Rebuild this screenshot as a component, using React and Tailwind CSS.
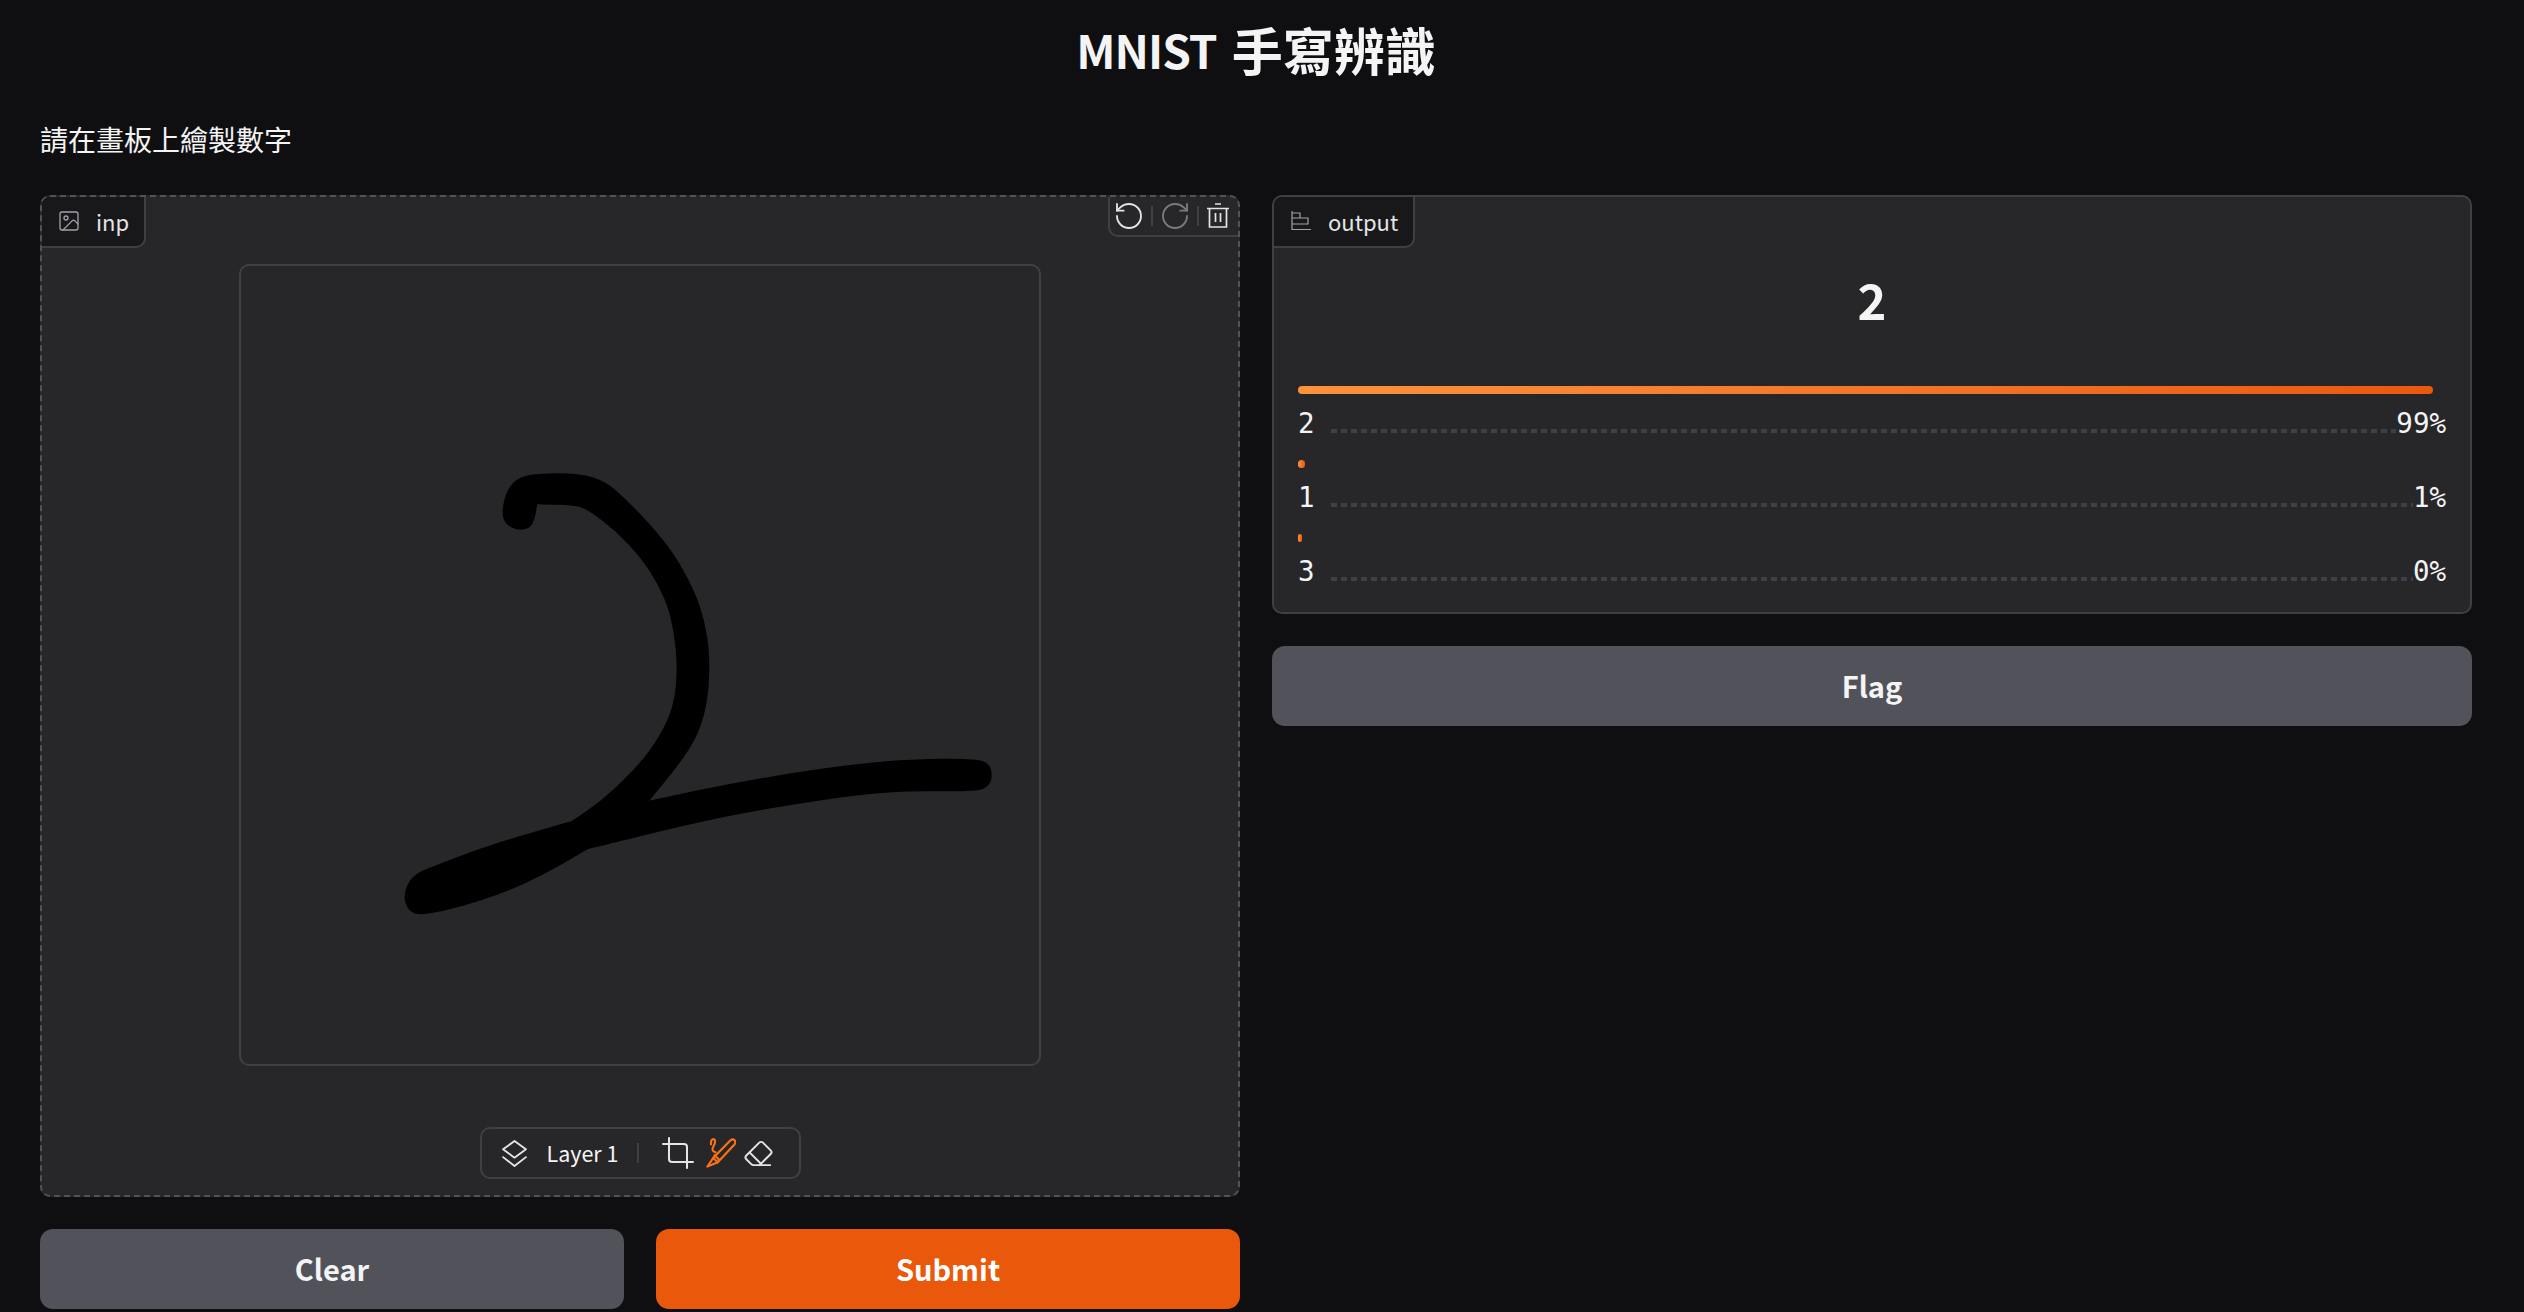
import { Image, RotateCcw, RotateCw, Crop, Eraser } from 'lucide-react';

const FONT = "font-['Noto_Sans_CJK_TC','Noto_Sans',sans-serif]";

// stroke outline traced from the sketch, doubled points stay sharp
const SKETCH = [
  [340,242],[308,224],[298,190],[308,128],[333,86],[380,70],[490,70],[552,93],[600,145],[660,220],[720,310],[770,420],[795,510],[808,610],[805,740],[782,850],[732,945],
  [660,1052],[660,1052],[800,1015],[1000,970],[1180,940],[1300,928],[1462,925],[1494,943],[1500,975],[1494,1007],[1462,1025],[1300,1023],[1180,1033],[1000,1065],[800,1110],
  [510,1197],[510,1197],[400,1275],[300,1330],[200,1370],[105,1396],[70,1386],[56,1335],[78,1277],[130,1248],[280,1180],
  [470,1113],[470,1113],[540,1055],[610,975],[660,905],[705,815],[725,730],[728,620],[712,490],[680,400],[640,325],[580,245],[510,180],[480,166],
  [385,163],[385,163],[380,205],[368,234],
];

function smoothPath(pts) {
  const mid = (a, b) => [(a[0] + b[0]) / 2, (a[1] + b[1]) / 2];
  let d = `M${mid(pts[pts.length - 1], pts[0]).join(' ')}`;
  pts.forEach((p, i) => {
    const next = pts[(i + 1) % pts.length];
    d += ` Q${p.join(' ')} ${mid(p, next).join(' ')}`;
  });
  return d + 'Z';
}

const RESULTS = [
  { label: '2', pct: '99%', bar: 'w-[1135px]' },
  { label: '1', pct: '1%', bar: 'w-[7px]' },
  { label: '3', pct: '0%', bar: 'w-[4px]' },
];

function Separator() {
  return <div className="w-[2px] h-5 bg-[#3f3f46]" />;
}

function TrashIcon() {
  return (
    <svg className="w-[22px] h-[25px] -ml-[2px] -mt-[2px] text-[#e4e4e7]" viewBox="0 0 22 25" fill="none" stroke="currentColor" strokeWidth="1.7">
      <path d="M8 1h6M0 5.5h22M2.5 5.5V24h17V5.5M8.5 10v9M13.5 10v9" />
    </svg>
  );
}

function BarsIcon() {
  return (
    <svg className="w-5 h-5 text-[#a1a1aa]" viewBox="0 0 20 20" fill="none" stroke="currentColor" strokeWidth="1.2">
      <path d="M1 0v18.5h19M1 2h8v5H1M1 7h16v6H1M1 13h16" />
    </svg>
  );
}

function LayersIcon() {
  return (
    <svg className="w-[25px] h-[27px] -ml-[1px] text-[#e4e4e7]" viewBox="0 0 24 26" fill="none" stroke="currentColor" strokeWidth="1.8" strokeLinejoin="round" strokeLinecap="round">
      <path d="M12 1 23 9 12 17 1 9Z" />
      <path d="M1 16.5 12 25l11-8.5" />
    </svg>
  );
}

function BrushIcon() {
  return (
    <svg className="w-[30px] h-[30px] ml-[10px] shrink-0 text-[#f97316]" viewBox="0 0 84 84" fill="none" stroke="currentColor" strokeWidth="6" strokeLinejoin="round" strokeLinecap="round">
      <path d="M20 56 68 7Q75 1 80 6 85 12 79 19L33 68Z" />
      <path d="M20 56 4 80 33 68M24 48l13 13" />
      <path d="M14 18Q13 3 21 3 30 5 21 23 13 36 27 40" />
    </svg>
  );
}

export default function App() {
  return (
    <div className={`h-[1312px] overflow-hidden bg-[#0f0f11] pl-10 pr-[52px] text-[#f4f4f5] ${FONT}`}>
      <h1 className="h-[98px] flex items-center justify-center gap-[15px] text-[51px] font-bold leading-none">
        <span className="text-[46px] tracking-[-1px]">MNIST</span>
        <span>手寫辨識</span>
      </h1>
      <p className="h-[82px] mb-[15px] flex items-center text-[28px] leading-none">請在畫板上繪製數字</p>

      <div className="grid grid-cols-2 gap-8">
        {/* Left column */}
        <div className="flex flex-col gap-8">
          <div className="relative h-[1002px] flex flex-col items-center rounded-[10px] border-2 border-dashed border-[#52525b] bg-[#27272a] pt-[67px]">
            <div className="absolute left-0 top-0 w-[104px] h-[51px] flex items-center gap-[18px] pl-[18px] pb-[2px] rounded-tl-[8px] rounded-br-[10px] border-r-2 border-b-2 border-[#3f3f46] bg-[#18181b] text-[22px] leading-none text-[#e4e4e7]">
              <Image className="w-6 h-6 -m-[3px] text-[#a1a1aa]" strokeWidth={1.3} />
              <span>inp</span>
            </div>

            <div className="absolute right-0 top-0 h-10 flex items-center gap-[10px] pl-[7px] pr-[9px] rounded-bl-[10px] rounded-tr-[8px] border-l-2 border-b-2 border-[#3f3f46]">
              <RotateCcw className="w-8 h-8 -m-1 text-[#e4e4e7]" strokeWidth={1.4} />
              <Separator />
              <RotateCw className="w-8 h-8 -m-1 text-[#7a7a80]" strokeWidth={1.4} />
              <Separator />
              <TrashIcon />
            </div>

            {/* Canvas */}
            <div className="w-[802px] h-[802px] rounded-[10px] border-2 border-[#3f3f46]">
              <svg className="block w-full h-full" viewBox="-417 -552 2394 2394">
                <g transform="scale(1.2245 1)">
                  <path d={smoothPath(SKETCH)} fill="#000" />
                </g>
              </svg>
            </div>

            {/* Tools */}
            <div className="mt-[61px] w-[321px] h-[52px] flex items-center pl-[21px] rounded-[10px] border-2 border-[#3f3f46]">
              <LayersIcon />
              <span className="ml-5 w-[70px] text-[21.5px] leading-none text-[#f4f4f5] whitespace-nowrap">Layer 1</span>
              <div className="ml-[20px]"><Separator /></div>
              <Crop className="ml-[21px] w-9 h-9 shrink-0 text-[#e4e4e7]" strokeWidth={1.35} />
              <BrushIcon />
              <Eraser className="ml-[7px] w-[31px] h-[31px] shrink-0 text-[#e4e4e7]" strokeWidth={1.5} />
            </div>
          </div>

          <div className="grid grid-cols-2 gap-8">
            <button className="h-20 rounded-[13px] bg-[#52525b] text-[29px] font-bold text-[#f4f4f5]">Clear</button>
            <button className="h-20 rounded-[13px] bg-[#ea580c] text-[29px] font-bold text-white">Submit</button>
          </div>
        </div>

        {/* Right column */}
        <div className="flex flex-col gap-8">
          <div className="relative h-[419px] rounded-[10px] border-2 border-[#3f3f46] bg-[#27272a] px-6 pt-16">
            <div className="absolute left-0 top-0 w-[141px] h-[51px] flex items-center gap-[17px] pl-[17px] pb-[2px] rounded-tl-[8px] rounded-br-[10px] border-r-2 border-b-2 border-[#3f3f46] bg-[#18181b] text-[22px] leading-none text-[#e4e4e7]">
              <BarsIcon />
              <span>output</span>
            </div>

            <div className="h-[75px] mb-[50px] flex items-center justify-center text-[49px] font-bold leading-none">2</div>

            {RESULTS.map((r) => (
              <div key={r.label} className="h-[74px]">
                <div className={`h-2 rounded-full bg-linear-to-r from-[#fb923c] to-[#ea580c] ${r.bar}`} />
                <div className="h-[58px] flex items-center font-['DejaVu_Sans_Mono',monospace] text-[27.5px] leading-none text-[#f4f4f5]">
                  <span className="mt-[2px]">{r.label}</span>
                  <div className="flex-1 ml-4 mt-4 h-1 bg-[repeating-linear-gradient(90deg,#3f3f46_0,#3f3f46_6px,transparent_6px,transparent_10px)]" />
                  <span className="mt-[2px]">{r.pct}</span>
                </div>
              </div>
            ))}
          </div>

          <button className="h-20 rounded-[13px] bg-[#52525b] text-[29px] font-bold text-[#f4f4f5]">Flag</button>
        </div>
      </div>
    </div>
  );
}
